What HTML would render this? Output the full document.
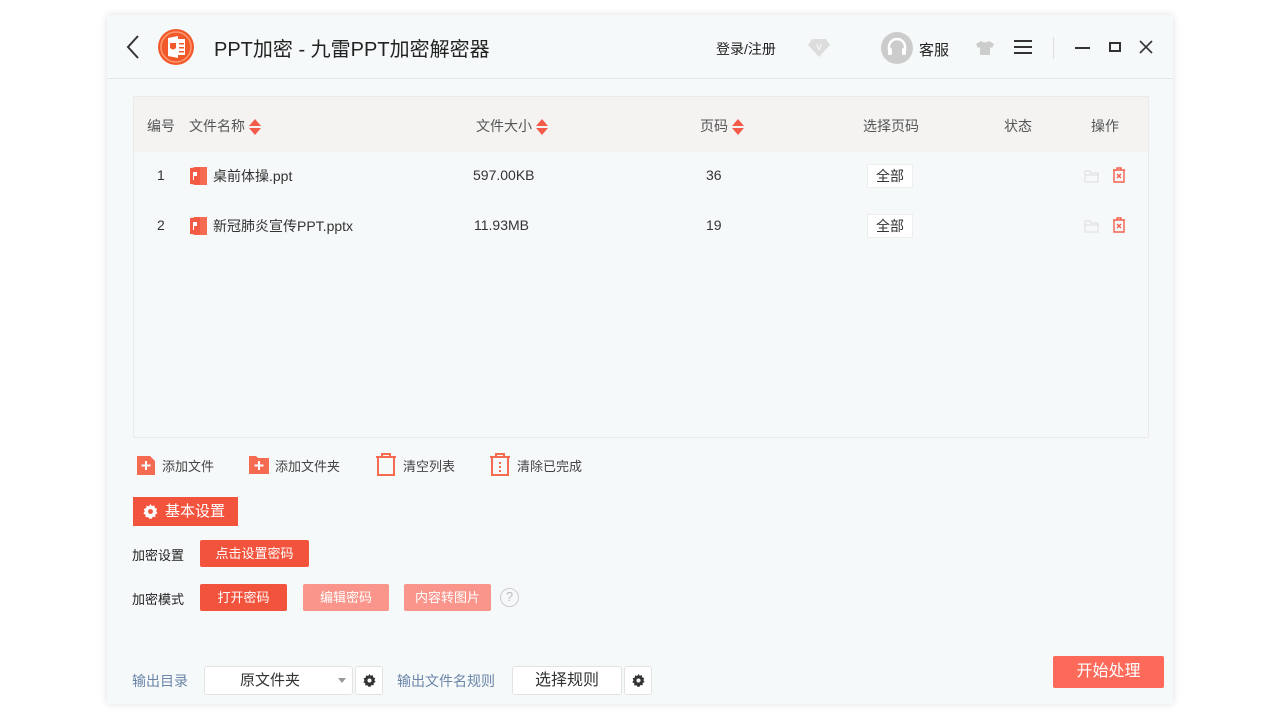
<!DOCTYPE html>
<html><head><meta charset="utf-8"><style>
*{margin:0;padding:0;box-sizing:border-box}
body{width:1280px;height:720px;background:#fff;font-family:"Liberation Sans","Noto Sans CJK SC",sans-serif;position:relative;overflow:hidden;color:#333}
.win{position:absolute;left:107px;top:15px;width:1066px;height:689px;background:#f6f9fa;box-shadow:0 0 8px rgba(0,0,0,.12)}
.abs{position:absolute}
.t{position:absolute;white-space:nowrap}
.hdr{position:absolute;left:0;top:0;width:1066px;height:64px;border-bottom:1px solid #e3e6e8}
.tbl{position:absolute;left:26px;top:81px;width:1016px;height:342px;border:1px solid #e8eaec;background:#f6f9fa}
.th{position:absolute;left:0;top:0;width:1014px;height:55px;background:#f4f3f2}
.sort{display:inline-block;width:12px;height:18px;vertical-align:middle;margin-left:4px}
.btn{position:absolute;color:#fff;font-size:13px;text-align:center;border-radius:2px}
.pg{position:absolute;width:46px;height:24px;background:#fff;border:1px solid #eee;font-size:14px;text-align:center;line-height:22px}
</style></head><body>
<div class="win">
<div class="hdr">
 <svg class="abs" style="left:18px;top:18px" width="16" height="28"><path d="M13 3 L3 14 L13 25" stroke="#333" stroke-width="2" fill="none"/></svg>
 <svg class="abs" style="left:50px;top:13px" width="38" height="38"><circle cx="19" cy="19" r="18" fill="#f1592a"/><circle cx="19" cy="19" r="15" fill="none" stroke="#ff9a70" stroke-width="1.5"/><rect x="18" y="11" width="10" height="16" fill="#fff"/><path d="M11 10 L21 8 L21 30 L11 28Z" fill="#fff"/><path d="M13 15 h6 v5 q-3 3 -6 0z" fill="#f1592a"/><rect x="22" y="15" width="5" height="1.5" fill="#f1592a"/><rect x="22" y="19" width="5" height="1.5" fill="#f1592a"/><rect x="22" y="23" width="5" height="1.5" fill="#f1592a"/></svg>
 <div class="t" style="left:107px;top:18px;font-size:20px;color:#222">PPT加密 - 九雷PPT加密解密器</div>
 <div class="t" style="left:609px;top:24px;font-size:14px;color:#222">登录/注册</div>
 <svg class="abs" style="left:700px;top:23px" width="24" height="20"><path d="M5 1 H19 L23 7 L12 19 L1 7Z" fill="#ddd"/><text x="12" y="12" font-size="8" fill="#fff" text-anchor="middle" font-family="Liberation Sans">V</text></svg>
 <svg class="abs" style="left:773px;top:16px" width="34" height="34"><circle cx="17" cy="17" r="16" fill="#ccc"/><path d="M9 19 v-3 a8 8 0 0 1 16 0 v3" stroke="#fff" stroke-width="2.5" fill="none"/><rect x="8" y="17" width="4" height="7" rx="1.5" fill="#fff"/><rect x="22" y="17" width="4" height="7" rx="1.5" fill="#fff"/></svg>
 <div class="t" style="left:812px;top:24px;font-size:15px;color:#222">客服</div>
 <svg class="abs" style="left:868px;top:25px" width="20" height="16"><path d="M6 1 L1 4 L3 8 L5 7 V15 H15 V7 L17 8 L19 4 L14 1 Q10 4 6 1Z" fill="#ccc"/></svg>
 <svg class="abs" style="left:906px;top:24px" width="20" height="16"><path d="M1 2H19M1 8H19M1 14H19" stroke="#333" stroke-width="2"/></svg>
 <div class="abs" style="left:946px;top:22px;width:1px;height:22px;background:#ddd"></div>
 <div class="abs" style="left:968px;top:32px;width:15px;height:2px;background:#333"></div>
 <div class="abs" style="left:1002px;top:27px;width:12px;height:10px;border:2px solid #333"></div>
 <svg class="abs" style="left:1032px;top:25px" width="14" height="14"><path d="M1 1L13 13M13 1L1 13" stroke="#333" stroke-width="1.6"/></svg>
</div>

<div class="tbl">
 <div class="th">
  <div class="t" style="left:13px;top:19px;font-size:14px;color:#555">编号</div>
  <div class="t" style="left:55px;top:19px;font-size:14px;color:#555">文件名称<svg class="sort" viewBox="0 0 12 18"><path d="M6 1L12 8H0Z M0 10H12L6 17Z" fill="#f25a4a"/></svg></div>
  <div class="t" style="left:342px;top:19px;font-size:14px;color:#555">文件大小<svg class="sort" viewBox="0 0 12 18"><path d="M6 1L12 8H0Z M0 10H12L6 17Z" fill="#f25a4a"/></svg></div>
  <div class="t" style="left:566px;top:19px;font-size:14px;color:#555">页码<svg class="sort" viewBox="0 0 12 18"><path d="M6 1L12 8H0Z M0 10H12L6 17Z" fill="#f25a4a"/></svg></div>
  <div class="t" style="left:729px;top:19px;font-size:14px;color:#555">选择页码</div>
  <div class="t" style="left:870px;top:19px;font-size:14px;color:#555">状态</div>
  <div class="t" style="left:957px;top:19px;font-size:14px;color:#555">操作</div>
 </div>
 <div class="t" style="left:23px;top:70px;font-size:14px">1</div>
 <svg class="abs" style="left:55px;top:69px" width="19" height="20"><path d="M5 1H18V19H5Z" fill="#f56b52"/><path d="M1 2L11 1V19L1 18Z" fill="#f25a44"/><path d="M4 6H8V10H5V14H4Z" fill="#fff"/></svg>
 <div class="t" style="left:79px;top:69px;font-size:14px">桌前体操.ppt</div>
 <div class="t" style="left:339px;top:70px;font-size:14px">597.00KB</div>
 <div class="t" style="left:572px;top:70px;font-size:14px">36</div>
 <div class="pg" style="left:733px;top:67px">全部</div>
 <svg class="abs" style="left:950px;top:72px" width="16" height="14"><path d="M1 2H6L7 4H14V13H1Z M1 6H15" stroke="#ddd" fill="none"/></svg>
 <svg class="abs" style="left:978px;top:70px" width="14" height="16"><path d="M1 3H13M5 3V1H9V3M2 3V15H12V3" stroke="#f2604c" stroke-width="1.4" fill="none"/><path d="M5 7L9 11M9 7L5 11" stroke="#f2604c" stroke-width="1.4"/></svg>
 <div class="t" style="left:23px;top:120px;font-size:14px">2</div>
 <svg class="abs" style="left:55px;top:119px" width="19" height="20"><path d="M5 1H18V19H5Z" fill="#f56b52"/><path d="M1 2L11 1V19L1 18Z" fill="#f25a44"/><path d="M4 6H8V10H5V14H4Z" fill="#fff"/></svg>
 <div class="t" style="left:79px;top:119px;font-size:14px">新冠肺炎宣传PPT.pptx</div>
 <div class="t" style="left:340px;top:120px;font-size:14px">11.93MB</div>
 <div class="t" style="left:572px;top:120px;font-size:14px">19</div>
 <div class="pg" style="left:733px;top:117px">全部</div>
 <svg class="abs" style="left:950px;top:122px" width="16" height="14"><path d="M1 2H6L7 4H14V13H1Z M1 6H15" stroke="#ddd" fill="none"/></svg>
 <svg class="abs" style="left:978px;top:120px" width="14" height="16"><path d="M1 3H13M5 3V1H9V3M2 3V15H12V3" stroke="#f2604c" stroke-width="1.4" fill="none"/><path d="M5 7L9 11M9 7L5 11" stroke="#f2604c" stroke-width="1.4"/></svg>
</div>

<svg class="abs" style="left:29px;top:440px" width="20" height="21"><path d="M1 1H14L19 6V20H1Z" fill="#f56b52"/><path d="M10 6V15M5.5 10.5H14.5" stroke="#fff" stroke-width="2"/></svg>
<div class="t" style="left:55px;top:441px;font-size:13px;color:#444">添加文件</div>
<svg class="abs" style="left:141px;top:440px" width="22" height="20"><path d="M1 1H8L10 3H21V19H1Z" fill="#f56b52"/><path d="M11 6V15M6.5 10.5H15.5" stroke="#fff" stroke-width="2"/></svg>
<div class="t" style="left:168px;top:441px;font-size:13px;color:#444">添加文件夹</div>
<svg class="abs" style="left:268px;top:438px" width="22" height="24"><path d="M1 4H21M7 4V1H15V4M3 4V22H19V4" stroke="#f56b52" stroke-width="2" fill="none"/></svg>
<div class="t" style="left:296px;top:441px;font-size:13px;color:#444">清空列表</div>
<svg class="abs" style="left:382px;top:438px" width="22" height="24"><path d="M1 4H21M7 4V1H15V4M3 4V22H19V4" stroke="#f56b52" stroke-width="2" fill="none"/><path d="M11 9V11M11 13V15M11 17V19" stroke="#f56b52" stroke-width="2"/></svg>
<div class="t" style="left:410px;top:441px;font-size:13px;color:#444">清除已完成</div>

<div class="btn" style="left:26px;top:482px;width:105px;height:29px;background:#f2533d;border-radius:0;font-size:15px;line-height:29px;text-align:left;padding-left:32px">基本设置</div>
<svg class="abs" style="left:36px;top:489px" width="15" height="15" viewBox="0 0 16 16"><path d="M8 0l1.5 2.2 2.6-.8.4 2.7 2.6.9-1.1 2.5 1.5 2.3-2.4 1.3.1 2.7-2.7-.2L8.9 16 8 15.5 7.1 16l-1.7-2.1-2.7.2.1-2.7L.4 10.1l1.5-2.3L.8 5.3l2.6-.9.4-2.7 2.6.8z" fill="#fff"/><circle cx="8" cy="8" r="2.6" fill="#f2533d"/></svg>

<div class="t" style="left:25px;top:530px;font-size:13px;color:#222">加密设置</div>
<div class="btn" style="left:93px;top:525px;width:109px;height:27px;line-height:27px;background:#f2533d">点击设置密码</div>
<div class="t" style="left:25px;top:574px;font-size:13px;color:#222">加密模式</div>
<div class="btn" style="left:93px;top:569px;width:87px;height:27px;line-height:27px;background:#f2533d">打开密码</div>
<div class="btn" style="left:196px;top:569px;width:86px;height:27px;line-height:27px;background:#f9958a">编辑密码</div>
<div class="btn" style="left:297px;top:569px;width:87px;height:27px;line-height:27px;background:#f9958a">内容转图片</div>
<div class="abs" style="left:393px;top:573px;width:19px;height:19px;border:1.5px solid #ccc;border-radius:50%;color:#bbb;font-size:13px;text-align:center;line-height:16px">?</div>

<div class="t" style="left:25px;top:656px;font-size:14px;color:#6a85a8">输出目录</div>
<div class="abs" style="left:97px;top:651px;width:149px;height:29px;background:#fff;border:1px solid #e2e2e2;border-radius:3px;font-size:15px;line-height:27px;padding-left:35px">原文件夹</div>
<div class="abs" style="left:231px;top:663px;border:4px solid transparent;border-top:5px solid #999"></div>
<div class="abs" style="left:248px;top:651px;width:28px;height:29px;background:#fff;border:1px solid #e2e2e2;border-radius:3px"></div>
<svg class="abs" style="left:256px;top:659px" width="13" height="13" viewBox="0 0 16 16"><path d="M8 0l1.5 2.2 2.6-.8.4 2.7 2.6.9-1.1 2.5 1.5 2.3-2.4 1.3.1 2.7-2.7-.2L8.9 16 8 15.5 7.1 16l-1.7-2.1-2.7.2.1-2.7L.4 10.1l1.5-2.3L.8 5.3l2.6-.9.4-2.7 2.6.8z" fill="#333"/><circle cx="8" cy="8" r="2.5" fill="#fff"/></svg>
<div class="t" style="left:290px;top:656px;font-size:14px;color:#6a85a8">输出文件名规则</div>
<div class="abs" style="left:405px;top:651px;width:110px;height:29px;background:#fff;border:1px solid #e2e2e2;border-radius:3px;font-size:16px;line-height:27px;text-align:center">选择规则</div>
<div class="abs" style="left:517px;top:651px;width:28px;height:29px;background:#fff;border:1px solid #e2e2e2;border-radius:3px"></div>
<svg class="abs" style="left:525px;top:659px" width="13" height="13" viewBox="0 0 16 16"><path d="M8 0l1.5 2.2 2.6-.8.4 2.7 2.6.9-1.1 2.5 1.5 2.3-2.4 1.3.1 2.7-2.7-.2L8.9 16 8 15.5 7.1 16l-1.7-2.1-2.7.2.1-2.7L.4 10.1l1.5-2.3L.8 5.3l2.6-.9.4-2.7 2.6.8z" fill="#333"/><circle cx="8" cy="8" r="2.5" fill="#fff"/></svg>
<div class="btn" style="left:946px;top:641px;width:111px;height:32px;line-height:32px;background:#fd6a5a;font-size:16px">开始处理</div>
</div>
</body></html>
